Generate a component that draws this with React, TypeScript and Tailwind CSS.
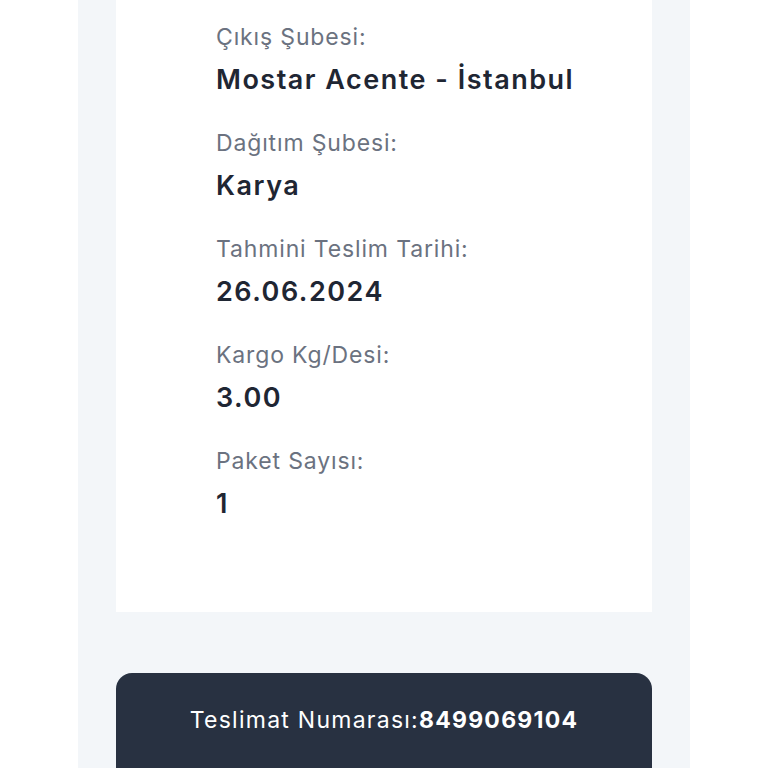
import React from "react";

const items = [
  { label: "Çıkış Şubesi:", value: "Mostar Acente - İstanbul" },
  { label: "Dağıtım Şubesi:", value: "Karya" },
  { label: "Tahmini Teslim Tarihi:", value: "26.06.2024" },
  { label: "Kargo Kg/Desi:", value: "3.00" },
  { label: "Paket Sayısı:", value: "1" },
];

export default function App() {
  return (
    <div className="w-[768px] h-[768px] overflow-hidden bg-white" style={{ fontFamily: "Inter, 'Noto Sans', sans-serif" }}>
      <div className="ml-[78px] w-[612px] h-full bg-[#f3f6f9] px-[38px]">
        <div className="bg-white pl-[100px] pt-[21px] pb-[90px] flex flex-col gap-[29px]">
          {items.map((it) => (
            <div key={it.label} className="flex flex-col gap-[9px]">
              <div className="text-[23px] leading-[32px] tracking-[0.85px] text-[#6b7280]">{it.label}</div>
              <div className="text-[27px] leading-[36px] tracking-[1.5px] font-semibold text-[#1f2633]">{it.value}</div>
            </div>
          ))}
        </div>
        <div className="mt-[61px] bg-[#283141] rounded-t-[16px] h-[200px] pt-[31px] flex justify-center">
          <div className="text-[23px] leading-[32px] tracking-[1.25px] text-white">
            Teslimat Numarası:<span className="font-bold">8499069104</span>
          </div>
        </div>
      </div>
    </div>
  );
}
